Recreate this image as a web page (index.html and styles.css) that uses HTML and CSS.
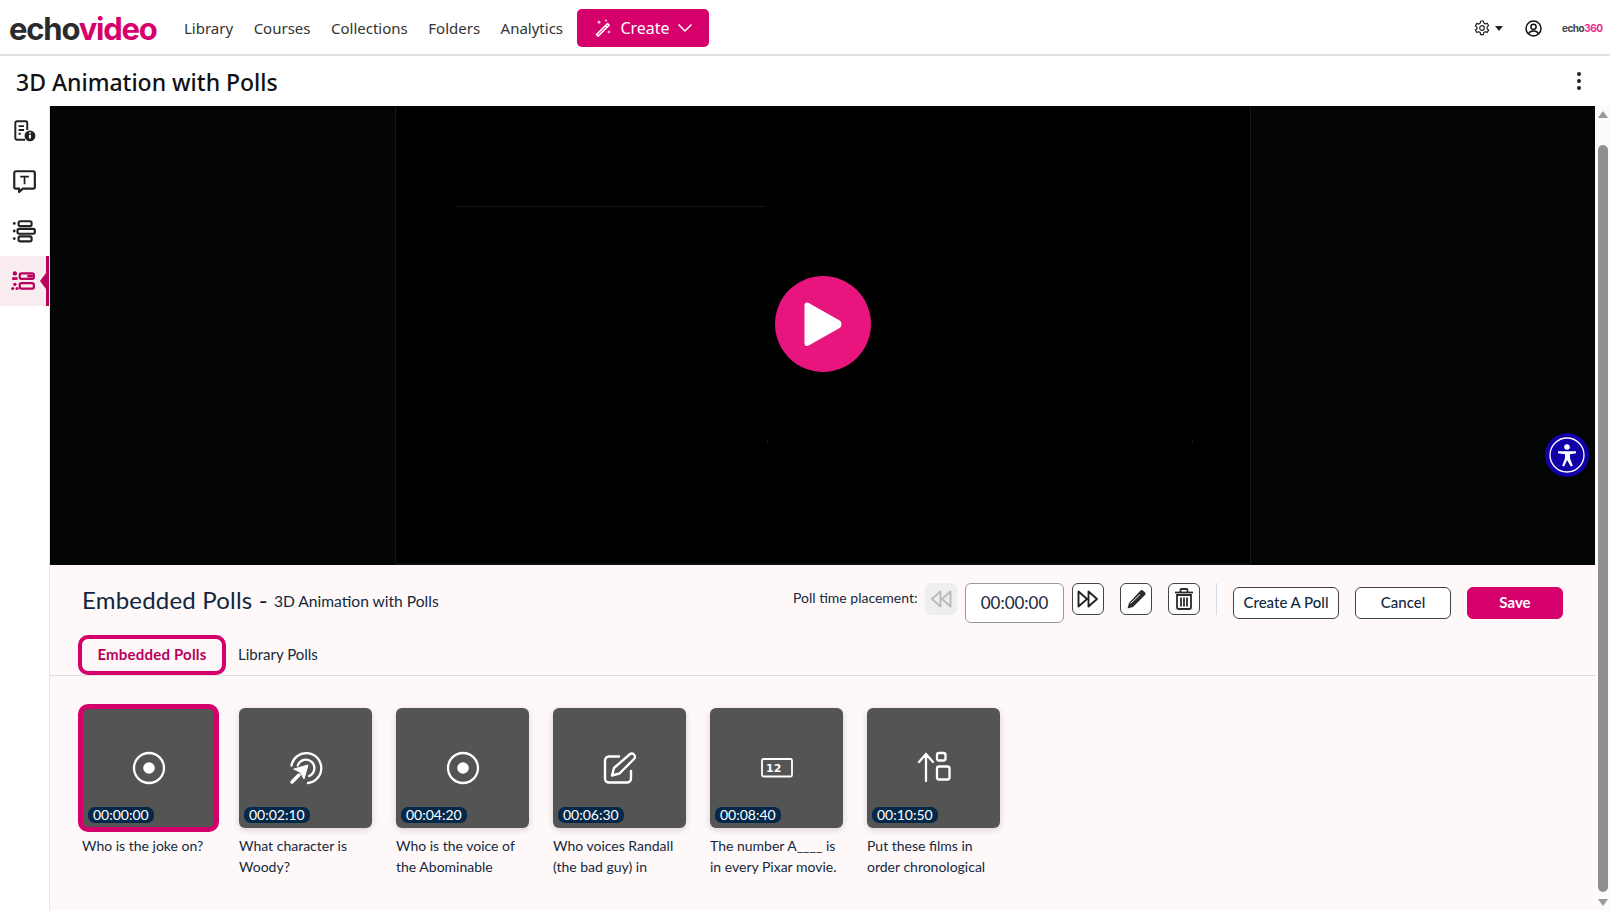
FILE: index.html
```html
<!DOCTYPE html>
<html lang="en">
<head>
    <meta charset="UTF-8">
    <title>3D Animation with Polls</title>
    <link rel="stylesheet" href="styles.css">
</head>
<body>

<header class="topbar">
    <div class="logo"><span class="logo-dark">echo</span><span class="logo-pink">video</span></div>
    <nav class="nav">
        <a>Library</a>
        <a>Courses</a>
        <a>Collections</a>
        <a>Folders</a>
        <a>Analytics</a>
    </nav>
    <button class="create">
        <svg width="20" height="20" viewBox="0 0 20 20" fill="none" stroke="#fff" stroke-width="1.5" stroke-linejoin="round">
            <path d="M14.5 5.5 3.5 16.5l1.6 1.6L16.1 7.1z"/>
            <path d="M12.3 7.7l1.6 1.6"/>
            <path d="M6 2l.6 1.6L8.2 4.2l-1.6.6L6 6.4l-.6-1.6L3.8 4.2l1.6-.6z" fill="#fff" stroke="none"/>
            <path d="M16 12l.5 1.5 1.5.5-1.5.5L16 16l-.5-1.5L14 14l1.500-.5z" fill="#fff" stroke="none"/>
            <path d="M13 1l.4 1.100 1.100.4-1.100.4L13 4l-.4-1.100-1.100-.4 1.100-.4z" fill="#fff" stroke="none"/>
        </svg>
        <span>Create</span>
        <svg width="16" height="10" viewBox="0 0 16 10" fill="none" stroke="#fff" stroke-width="1.5"><path d="M1.500 1.500 8 8l6.500-6.500"/></svg>
    </button>
    <div class="topbar-right">
        <div class="settings">
            <svg width="16" height="16" viewBox="0 0 16 16" fill="none" stroke="#222" stroke-width="1.200" stroke-linejoin="round">
                <path d="M6.600 1h2.800l.4 2 1.500.9 1.900-.7 1.400 2.400-1.500 1.300v1.800l1.500 1.300-1.400 2.400-1.900-.7-1.500.9-.4 2H6.600l-.4-2-1.500-.9-1.900.7-1.400-2.400 1.500-1.300V7.100L1.400 5.800l1.400-2.400 1.900.7 1.500-.9z"/>
                <circle cx="8" cy="8" r="2.300"/>
            </svg>
            <span class="caret"></span>
        </div>
        <svg class="user" width="17" height="17" viewBox="0 0 17 17" fill="none" stroke="#111" stroke-width="1.500">
            <circle cx="8.500" cy="8.500" r="7.500"/>
            <circle cx="8.500" cy="6.800" r="2.600"/>
            <path d="M3.500 14c.8-2.200 2.500-3 5-3s4.200.8 5 3"/>
        </svg>
        <div class="small-logo"><span class="small-dark">echo</span><span class="small-pink">360</span></div>
    </div>
</header>

<div class="titlebar">
    <h1>3D Animation with Polls</h1>
    <div class="kebab"><i></i><i></i><i></i></div>
</div>

<div class="main">
    <aside class="sidebar">
        <div class="side-item">
            <svg width="26" height="26" viewBox="0 0 24 24" fill="none" stroke="#222" stroke-width="1.800">
                <path d="M13 20H5.500A1.500 1.500 0 0 1 4 18.500v-14A1.500 1.500 0 0 1 5.500 3h8A1.500 1.500 0 0 1 15 4.500V11"/>
                <path d="M7 7.500h5M7 11h5M7 14.500h2"/>
                <circle cx="17.500" cy="16.500" r="5" fill="#222" stroke="none"/>
                <path d="M17.500 15.500v3.500M17.500 13.200v1.100" stroke="#fff"/>
            </svg>
        </div>
        <div class="side-item">
            <svg width="26" height="26" viewBox="0 0 24 24" fill="none" stroke="#222" stroke-width="2" stroke-linejoin="round">
                <path d="M4.500 3h16A1.500 1.500 0 0 1 22 4.500v13a1.500 1.500 0 0 1-1.500 1.500H11l-3.500 3.200V19h-3A1.500 1.500 0 0 1 3 17.500v-13A1.500 1.500 0 0 1 4.500 3z"/>
                <path d="M8.500 8h8M12.500 8v7" stroke-width="1.600"/>
            </svg>
        </div>
        <div class="side-item">
            <svg width="26" height="26" viewBox="0 0 24 24" fill="none" stroke="#222" stroke-width="2">
                <rect x="7" y="3" width="12" height="4.500" rx="1.500"/>
                <rect x="6" y="10" width="16" height="4.500" rx="1.500"/>
                <rect x="7" y="17" width="12" height="4.500" rx="1.500"/>
                <circle cx="3" cy="5" r="1.300" fill="#222" stroke="none"/>
                <circle cx="3" cy="12" r="1.300" fill="#222" stroke="none"/>
                <circle cx="3" cy="19" r="1.300" fill="#222" stroke="none"/>
            </svg>
        </div>
        <div class="side-item side-active">
            <svg width="26" height="26" viewBox="0 0 24 24" fill="none" stroke="#b8005f" stroke-width="2">
                <rect x="9" y="5" width="13" height="5" rx="1.500"/>
                <rect x="9" y="14" width="13" height="5" rx="1.500"/>
                <path d="M16 7.500h5" stroke-width="2.500"/>
                <circle cx="4.500" cy="5" r="2" fill="#b8005f" stroke="none"/>
                <path d="M2 11h5V8.500H2z" fill="#b8005f" stroke="none"/>
                <circle cx="4.500" cy="15" r="1.500" fill="#b8005f" stroke="none"/>
                <circle cx="2.500" cy="19" r="1.400" fill="#b8005f" stroke="none"/>
                <circle cx="6.500" cy="19" r="1.400" fill="#b8005f" stroke="none"/>
            </svg>
        </div>
    </aside>

    <div class="content">
        <section class="video">
            <div class="video-frame">
                <div class="glitch"></div>
                <div class="speck speck-left"></div>
                <div class="speck speck-right"></div>
                <div class="play">
                    <svg width="40" height="46" viewBox="0 0 40 46"><path d="M4 4 35 21.500a2 2 0 0 1 0 3.500L4 42.500z" fill="#fff" stroke="#fff" stroke-width="5" stroke-linejoin="round"/></svg>
                </div>
            </div>
            <div class="a11y">
                <svg width="36" height="36" viewBox="0 0 36 36" fill="none">
                    <circle cx="18" cy="18" r="17" stroke="#fff" stroke-width="1.300"/>
                    <circle cx="18" cy="10" r="2.800" fill="#fff"/>
                    <path d="M9 14.300h18v2l-6 1v4l2.800 7.500-2 .7L18 23l-2.800 6.500-2-.7L16 21.300v-4l-7-1z" fill="#fff"/>
                </svg>
            </div>
        </section>

        <section class="panel">
            <div class="panel-head">
                <div class="panel-title">
                    <h2>Embedded Polls -</h2>
                    <span>3D Animation with Polls</span>
                </div>
                <div class="tools">
                    <span class="time-label">Poll time placement:</span>
                    <button class="icon-btn disabled">
                        <svg width="24" height="20" viewBox="0 0 24 20" fill="none" stroke="#b9b9b9" stroke-width="1.900" stroke-linejoin="round"><path d="M11.500 2.500 3 10l8.500 7.500zM21.500 2.500 13 10l8.500 7.500z"/></svg>
                    </button>
                    <div class="time-box">00:00:00</div>
                    <button class="icon-btn">
                        <svg width="24" height="20" viewBox="0 0 24 20" fill="none" stroke="#222" stroke-width="1.900" stroke-linejoin="round"><path d="M2.500 2.500 11 10l-8.500 7.500zM12.500 2.500 21 10l-8.500 7.500z"/></svg>
                    </button>
                    <button class="icon-btn gap-left">
                        <svg width="22" height="22" viewBox="0 0 22 22"><path d="M15.500 2.500a1.800 1.800 0 0 1 2.500 0l2 2a1.800 1.800 0 0 1 0 2.500L8 19l-5.500 1.500L4 15z" fill="#2b2b2b"/><path d="M5.500 15.500 15 6.500" stroke="#fff" stroke-width="1"/></svg>
                    </button>
                    <button class="icon-btn gap-left">
                        <svg width="22" height="24" viewBox="0 0 22 24" fill="none" stroke="#2b2b2b" stroke-width="1.800"><path d="M2 5.500h18"/><path d="M7.500 5V3a1 1 0 0 1 1-1h5a1 1 0 0 1 1 1v2"/><path d="M4 8v12a2 2 0 0 0 2 2h10a2 2 0 0 0 2-2V8z"/><path d="M8 10.500v9M11 10.500v9M14 10.500v9"/></svg>
                    </button>
                    <div class="divider"></div>
                    <button class="btn btn-wide">Create A Poll</button>
                    <button class="btn">Cancel</button>
                    <button class="btn btn-save">Save</button>
                </div>
            </div>

            <div class="tabs">
                <div class="tab tab-active">Embedded Polls</div>
                <div class="tab">Library Polls</div>
            </div>

            <div class="polls">
                <div class="poll poll-selected">
                    <div class="thumb">
                        <svg width="34" height="34" viewBox="0 0 34 34" fill="none" stroke="#fff" stroke-width="2.300"><circle cx="17" cy="17" r="15"/><circle cx="17" cy="17" r="5.800" fill="#fff" stroke="none"/></svg>
                        <span class="stamp">00:00:00</span>
                    </div>
                    <p>Who is the joke on?</p>
                </div>
                <div class="poll">
                    <div class="thumb">
                        <svg width="34" height="34" viewBox="0 0 34 34" fill="none" stroke="#fff" stroke-width="2.300" stroke-linecap="round">
                            <path d="M2.500 14.500A15 15 0 1 1 19 32"/>
                            <path d="M8.800 14.500A8.500 8.500 0 1 1 20 25"/>
                            <path d="M3 31 10 24" stroke-width="3.400"/>
                            <path d="M5 18 19 14l-4 14-3.500-6.500z" fill="#fff" stroke="#fff" stroke-width="1" stroke-linejoin="round"/>
                        </svg>
                        <span class="stamp">00:02:10</span>
                    </div>
                    <p>What character is Woody?</p>
                </div>
                <div class="poll">
                    <div class="thumb">
                        <svg width="34" height="34" viewBox="0 0 34 34" fill="none" stroke="#fff" stroke-width="2.300"><circle cx="17" cy="17" r="15"/><circle cx="17" cy="17" r="5.800" fill="#fff" stroke="none"/></svg>
                        <span class="stamp">00:04:20</span>
                    </div>
                    <p>Who is the voice of the Abominable</p>
                </div>
                <div class="poll">
                    <div class="thumb">
                        <svg width="34" height="34" viewBox="0 0 34 34" fill="none" stroke="#fff" stroke-width="2.400" stroke-linejoin="round" stroke-linecap="round">
                            <path d="M16 5.500H6a4 4 0 0 0-4 4v18a4 4 0 0 0 4 4h18a4 4 0 0 0 4-4V20"/>
                            <path d="M26.500 3.500a3 3 0 0 1 4.500 4.500L16.500 22.500l-7.500 2 2-7.500z"/>
                        </svg>
                        <span class="stamp">00:06:30</span>
                    </div>
                    <p>Who voices Randall (the bad guy) in</p>
                </div>
                <div class="poll">
                    <div class="thumb">
                        <svg width="34" height="34" viewBox="0 0 34 34" fill="none">
                            <rect x="2" y="8" width="30" height="17.500" rx="1.500" stroke="#fff" stroke-width="1.800"/>
                            <text x="6" y="21" class="num-icon">12</text>
                        </svg>
                        <span class="stamp">00:08:40</span>
                    </div>
                    <p>The number A____ is in every Pixar movie.</p>
                </div>
                <div class="poll">
                    <div class="thumb">
                        <svg width="34" height="34" viewBox="0 0 34 34" fill="none" stroke="#fff" stroke-width="2.300" stroke-linecap="round" stroke-linejoin="round">
                            <path d="M9 30V3M2 11l7-8 7 8"/>
                            <rect x="20" y="2" width="8.500" height="7.500" rx="2"/>
                            <rect x="20" y="15.500" width="12.500" height="13" rx="2"/>
                        </svg>
                        <span class="stamp">00:10:50</span>
                    </div>
                    <p>Put these films in order chronological</p>
                </div>
            </div>
        </section>
    </div>

    <div class="scrollbar">
        <span class="arrow-up"></span>
        <div class="thumb-bar"></div>
        <span class="arrow-down"></span>
    </div>
</div>

</body>
</html>
```

FILE: styles.css
```css
* {
    box-sizing: border-box;
}

html, body {
    height: 100%;
}

body {
    margin: 0;
    overflow: hidden;
    display: flex;
    flex-direction: column;
    background: #fff;
    color: #222;
    font-family: "Noto Sans", sans-serif;
}

button {
    font-family: inherit;
    cursor: pointer;
}

/* top bar */
.topbar {
    display: flex;
    align-items: center;
    height: 56px;
    padding: 2px 9px 0 9px;
    border-bottom: 2px solid #e2e2e2;
    flex-shrink: 0;
}

.logo {
    font-family: Inter, sans-serif;
    font-weight: 700;
    font-size: 31px;
    letter-spacing: -1.2px;
    width: 175px;
    line-height: 1;
}

.logo-dark {
    color: #2b2a2c;
}

.logo-pink {
    color: #d6006c;
}

.nav {
    display: flex;
    gap: 20.500px;
    font-size: 15px;
    color: #333;
}

.create {
    display: flex;
    align-items: center;
    justify-content: center;
    gap: 7px;
    width: 132px;
    height: 38px;
    margin-left: 14px;
    border: 0;
    border-radius: 5px;
    background: #d6006c;
    color: #fff;
    font-size: 16px;
}

.topbar-right {
    display: flex;
    align-items: center;
    margin-left: auto;
}

.settings {
    display: flex;
    align-items: center;
    gap: 5px;
}

.caret {
    width: 0;
    height: 0;
    border-left: 4px solid transparent;
    border-right: 4px solid transparent;
    border-top: 5px solid #222;
}

.user {
    margin-left: 22px;
}

.small-logo {
    margin-left: 20px;
    font-family: Inter, sans-serif;
    font-weight: 700;
    font-size: 10px;
    letter-spacing: -.5px;
    width: 39px;
}

.small-dark {
    color: #444;
}

.small-pink {
    color: #f0288c;
}

/* title */
.titlebar {
    display: flex;
    align-items: center;
    justify-content: space-between;
    height: 50px;
    padding: 0 29px 0 16px;
    flex-shrink: 0;
}

h1 {
    margin: 2px 0 0;
    font-size: 23px;
    font-weight: 500;
    color: #111;
}

.kebab {
    display: flex;
    flex-direction: column;
    gap: 3px;
}

.kebab i {
    width: 4px;
    height: 4px;
    border-radius: 50%;
    background: #222;
}

.main {
    display: flex;
    flex: 1;
    min-height: 0;
}

/* side */
.sidebar {
    width: 50px;
    flex-shrink: 0;
    border-right: 1px solid #e6e6e6;
}

.side-item {
    position: relative;
    display: flex;
    align-items: center;
    justify-content: center;
    height: 50px;
    padding-right: 2px;
}

.side-active {
    background: #f9ecee;
    border-right: 3px solid #b8005f;
    padding-right: 0;
}

.side-active::after {
    content: "";
    position: absolute;
    right: 0;
    top: 17px;
    border-top: 8px solid transparent;
    border-bottom: 8px solid transparent;
    border-right: 6px solid #b8005f;
}

.content {
    flex: 1;
    min-width: 0;
    display: flex;
    flex-direction: column;
}

/* video */
.video {
    position: relative;
    height: 459px;
    flex-shrink: 0;
    background: #030503;
    display: flex;
    justify-content: center;
    padding-left: 1px;
}

.video-frame {
    position: relative;
    display: flex;
    align-items: center;
    justify-content: center;
    width: 856px;
    margin-left: -1px;
    background: #000;
    border-left: 1px solid #151815;
    border-right: 1px solid #151815;
    border-bottom: 2px solid #0d100d;
    padding-bottom: 21px;
}

.glitch {
    position: absolute;
    left: 60px;
    top: 100px;
    width: 310px;
    height: 1px;
    background: #131313;
}

.speck {
    position: absolute;
    top: 335px;
    width: 1px;
    height: 1px;
    background: #2c4a3a;
}

.speck-left {
    left: 371px;
}

.speck-right {
    left: 796px;
}

.play {
    display: flex;
    align-items: center;
    justify-content: center;
    width: 96px;
    height: 96px;
    padding-left: 1px;
    border-radius: 50%;
    background: #e8157f;
}

.a11y {
    position: absolute;
    right: 6px;
    top: 327px;
    display: flex;
    align-items: center;
    justify-content: center;
    width: 44px;
    height: 44px;
    border-radius: 50%;
    background: #1100a8;
}

/* polls panel */
.panel {
    flex: 1;
    background: #fff8f8;
    color: #14293d;
    font-family: Lato, sans-serif;
}

.panel-head {
    display: flex;
    justify-content: space-between;
    padding: 18px 32px 0;
}

.panel-title {
    display: flex;
    align-items: center;
    gap: 6px;
    height: 36px;
}

h2 {
    margin: 0 0 3px;
    font-size: 24px;
    font-weight: 400;
    letter-spacing: .2px;
    color: #10263c;
}

.panel-title span {
    font-size: 15.600px;
}

.tools {
    display: flex;
    align-items: flex-start;
}

.time-label {
    width: 132px;
    font-size: 14px;
    line-height: 30px;
}

.icon-btn {
    display: flex;
    align-items: center;
    justify-content: center;
    width: 32px;
    height: 32px;
    padding: 0;
    background: #fff;
    border: 1px solid #444;
    border-radius: 6px;
}

.disabled {
    background: #eeeeee;
    border-color: #eeeeee;
}

.gap-left {
    margin-left: 16px;
}

.time-box {
    width: 99px;
    height: 40px;
    margin: 0 8px;
    border: 1px solid #999;
    border-radius: 6px;
    background: #fff;
    font-size: 17px;
    line-height: 38px;
    text-align: center;
}

.divider {
    width: 1px;
    height: 32px;
    margin: 0 16px;
    background: #d5dbe5;
}

.btn {
    width: 96px;
    height: 32px;
    margin: 4px 16px 0 0;
    padding: 0 0 2px;
    border: 1px solid #444;
    border-radius: 6px;
    background: #fff;
    color: #14293d;
    font-size: 15px;
    font-weight: 500;
}

.btn-wide {
    width: 106px;
}

.btn-save {
    margin-right: 0;
    border-color: #d6006c;
    background: #d6006c;
    color: #fff;
    font-weight: 700;
}

.tabs {
    display: flex;
    align-items: stretch;
    height: 53px;
    padding: 12px 0 0 28px;
    border-bottom: 1px solid #dddddd;
}

.tab {
    display: flex;
    align-items: center;
    padding: 0 12px 2px;
    font-size: 15px;
}

.tab-active {
    width: 148px;
    justify-content: center;
    padding: 0 0 2px;
    border: 4px solid #d6006c;
    border-radius: 10px;
    color: #b8005f;
    font-weight: 700;
    letter-spacing: .2px;
}

.polls {
    display: flex;
    gap: 24px;
    padding: 32px 32px 0;
}

.poll {
    width: 133px;
}

.poll p {
    height: 42px;
    margin: 7px 0 0;
    overflow: hidden;
    font-size: 14px;
    line-height: 21px;
}

.thumb {
    position: relative;
    display: flex;
    align-items: center;
    justify-content: center;
    height: 120px;
    border-radius: 6px;
    background: #545454;
    box-shadow: 0 2px 6px rgba(60, 60, 90, .2);
}

.poll-selected .thumb {
    box-shadow: 0 0 0 4px #d6006c;
    border: 1px solid #d6006c;
}

.stamp {
    position: absolute;
    left: 5px;
    bottom: 5px;
    padding: 0 5px;
    border-radius: 7px;
    background: #03284a;
    color: #fff;
    font-size: 14px;
    line-height: 16px;
}

.poll-selected .stamp {
    left: 5px;
    bottom: 4px;
}

.num-icon {
    font-family: "DejaVu Sans", sans-serif;
    font-weight: 700;
    font-size: 11px;
    fill: #fff;
}

/* page scrollbar, runs next to video and panel */
.scrollbar {
    display: flex;
    flex-direction: column;
    align-items: center;
    width: 15px;
    flex-shrink: 0;
    padding: 5px 0 4px;
    background: #fbfbfb;
}

.arrow-up, .arrow-down {
    width: 0;
    height: 0;
    border-left: 5px solid transparent;
    border-right: 5px solid transparent;
}

.arrow-up {
    border-bottom: 7px solid #999;
}

.arrow-down {
    border-top: 7px solid #999;
}

.thumb-bar {
    flex: 1;
    width: 10px;
    margin: 27px 0 7px;
    border-radius: 5px;
    background: #8f8f8f;
}
```
